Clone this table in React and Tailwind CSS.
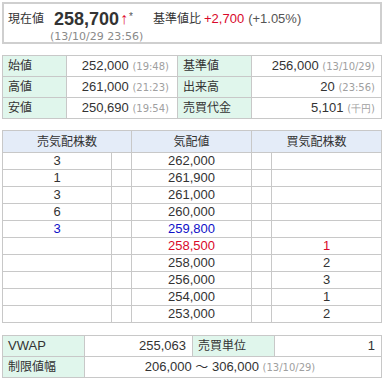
import React from 'react';

const sells = [
  { qty: '3', price: '262,000' },
  { qty: '1', price: '261,900' },
  { qty: '3', price: '261,000' },
  { qty: '6', price: '260,000' },
  { qty: '3', price: '259,800', blue: true },
];

const buys = [
  { qty: '1', price: '258,500', red: true },
  { qty: '2', price: '258,000' },
  { qty: '3', price: '256,000' },
  { qty: '1', price: '254,000' },
  { qty: '2', price: '253,000' },
];

function Sub({ children }) {
  return <span className="font-['DejaVu_Sans',sans-serif] text-[10px] text-[#a0a0a0]">{children}</span>;
}

export default function App() {
  const lbl = 'bg-[#e0f6ec] border border-[#c8c8c8] text-[12px] pl-[5px] text-left';
  const val = 'border border-[#c8c8c8] text-[13px] text-right';

  return (
    <div className="w-[384px] h-[383px] bg-white px-[2px] pt-[2px] text-[#333] font-['Liberation_Sans','Noto_Sans_CJK_JP',sans-serif]">
      {/* current price */}
      <div className="h-[42px] border-2 border-[#cfcfcf] pl-[4px] pt-[5px]">
        <div className="flex items-center h-[20px]">
          <span className="text-[12px] w-[46px]">現在値</span>
          <span className="text-[18px] font-bold leading-none">258,700</span>
          <span className="text-[16px] text-[#e0102f] ml-[1px] leading-none">↑</span>
          <span className="text-[10px] text-[#555] -mt-[6px] ml-[1px]">*</span>
          <span className="text-[12px] ml-[20px]">基準値比</span>
          <span className="text-[13px] text-[#d9082a] ml-[3px]">+2,700</span>
          <span className="text-[13px] text-[#555] ml-[4px]">(+1.05%)</span>
        </div>
        <div className="flex mt-[1px]">
          <div className="w-[42px] shrink-0"></div>
          <span className="font-['DejaVu_Sans',sans-serif] text-[11px] text-[#8a8a8a] leading-[13px]">
            (13/10/29 23:56)
          </span>
        </div>
      </div>

      {/* price summary */}
      <table className="mt-[11px] w-[380px] table-fixed border-collapse">
        <colgroup>
          <col className="w-[64px]" />
          <col className="w-[111px]" />
          <col className="w-[74px]" />
          <col />
        </colgroup>
        <tbody>
          {[
            ['始値', '252,000', '(19:48)', '基準値', '256,000', '(13/10/29)'],
            ['高値', '261,000', '(21:23)', '出来高', '20', '(23:56)'],
            ['安値', '250,690', '(19:54)', '売買代金', '5,101', '(千円)'],
          ].map((r) => (
            <tr key={r[0]} className="h-[21px]">
              <td className={lbl}>{r[0]}</td>
              <td className={val + ' pr-[8px]'}>
                {r[1]} <Sub>{r[2]}</Sub>
              </td>
              <td className={lbl}>{r[3]}</td>
              <td className={val + ' pr-[6px]'}>
                {r[4]} <Sub>{r[5]}</Sub>
              </td>
            </tr>
          ))}
        </tbody>
      </table>

      {/* order book */}
      <table className="mt-[11px] w-[380px] table-fixed border-collapse text-[13px]">
        <colgroup>
          <col className="w-[109px]" />
          <col className="w-[20px]" />
          <col className="w-[120px]" />
          <col className="w-[20px]" />
          <col />
        </colgroup>
        <thead>
          <tr className="h-[22px] bg-[#e4ecf8] text-[12px]">
            <th colSpan={2} className="border border-[#c8c8c8] font-normal">売気配株数</th>
            <th className="border border-[#c8c8c8] font-normal">気配値</th>
            <th colSpan={2} className="border border-[#c8c8c8] font-normal">買気配株数</th>
          </tr>
        </thead>
        <tbody>
          {sells.map((r, i) => (
            <tr key={'s' + i} className="h-[17px] leading-[16px]">
              <td className={'border border-[#c8c8c8] text-center ' + (r.blue ? 'text-[#1010c8]' : '')}>{r.qty}</td>
              <td className="border border-[#c8c8c8]"></td>
              <td className={'border border-[#c8c8c8] text-center ' + (r.blue ? 'text-[#1010c8]' : '')}>{r.price}</td>
              <td className="border border-[#c8c8c8]"></td>
              <td className="border border-[#c8c8c8]"></td>
            </tr>
          ))}
          {buys.map((r, i) => (
            <tr key={'b' + i} className="h-[17px] leading-[16px]">
              <td className="border border-[#c8c8c8]"></td>
              <td className="border border-[#c8c8c8]"></td>
              <td className={'border border-[#c8c8c8] text-center ' + (r.red ? 'text-[#d9082a]' : '')}>{r.price}</td>
              <td className="border border-[#c8c8c8]"></td>
              <td className={'border border-[#c8c8c8] text-center ' + (r.red ? 'text-[#d9082a]' : '')}>{r.qty}</td>
            </tr>
          ))}
        </tbody>
      </table>

      {/* vwap / limits */}
      <table className="mt-[12px] w-[380px] table-fixed border-collapse">
        <colgroup>
          <col className="w-[82px]" />
          <col className="w-[108px]" />
          <col className="w-[82px]" />
          <col />
        </colgroup>
        <tbody>
          <tr className="h-[21px]">
            <td className={lbl + ' !text-[13px]'}>VWAP</td>
            <td className={val + ' pr-[6px]'}>255,063</td>
            <td className={lbl}>売買単位</td>
            <td className={val + ' pr-[6px]'}>1</td>
          </tr>
          <tr className="h-[21px]">
            <td className={lbl}>制限値幅</td>
            <td colSpan={3} className="border border-[#c8c8c8] text-[13px] text-center pr-[6px]">
              206,000 〜 306,000 <Sub>(13/10/29)</Sub>
            </td>
          </tr>
        </tbody>
      </table>
    </div>
  );
}
